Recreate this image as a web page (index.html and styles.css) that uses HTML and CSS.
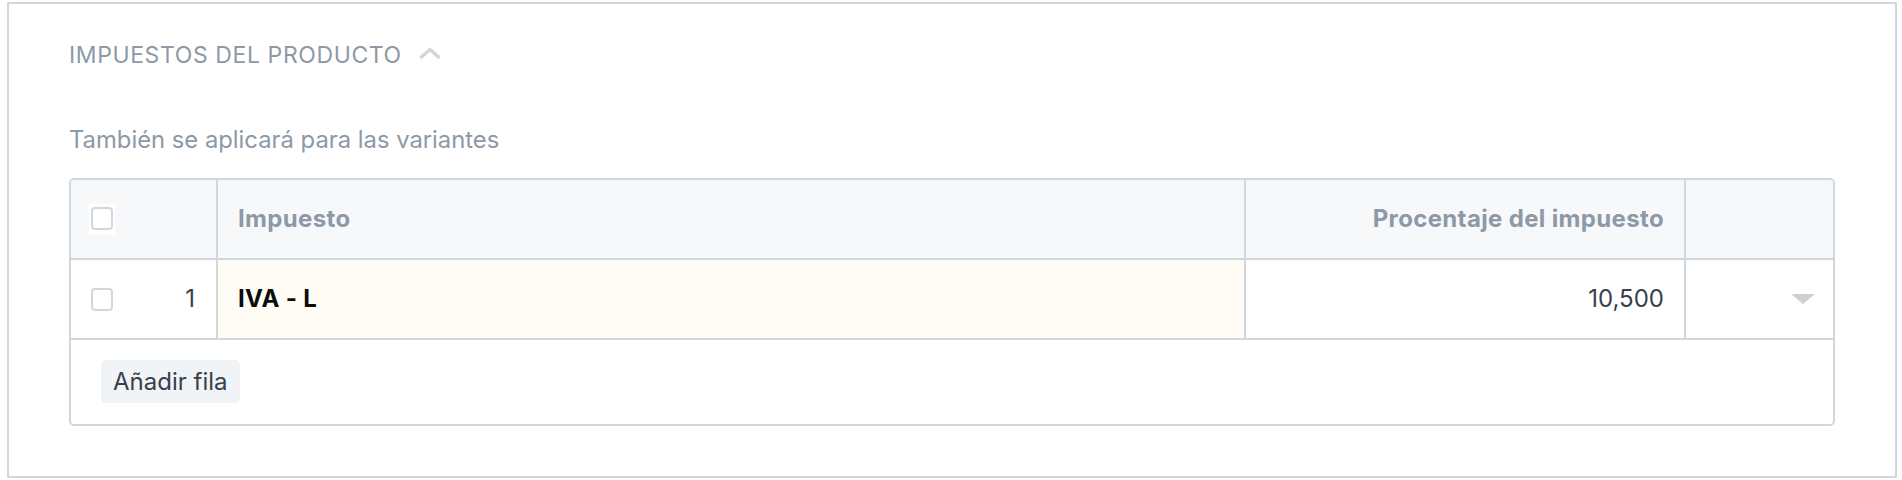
FILE: index.html
```html
<!DOCTYPE html>
<html lang="es">
<head>
<meta charset="utf-8">
<title>Impuestos del producto</title>
<link rel="stylesheet" href="styles.css">
</head>
<body>
<div class="page">
  <section class="panel">
    <div class="section-head">
      <span class="section-title">IMPUESTOS DEL PRODUCTO</span>
      <svg class="chevron" width="22" height="12" viewBox="0 0 22 12" aria-hidden="true">
        <polyline points="2.5,10 11,2.5 19.5,10" fill="none" stroke="#d1d8dd" stroke-width="3.6" stroke-linecap="round" stroke-linejoin="round"/>
      </svg>
    </div>
    <p class="help">También se aplicará para las variantes</p>
    <div class="grid">
      <div class="grid-row grid-head">
        <div class="cell c-idx"><span class="cb-wrap"><span class="cb"></span></span></div>
        <div class="cell c-name">Impuesto</div>
        <div class="cell c-rate">Procentaje del impuesto</div>
        <div class="cell c-act"></div>
      </div>
      <div class="grid-row grid-body">
        <div class="cell c-idx"><span class="cb"></span><span class="row-no">1</span></div>
        <div class="cell c-name editable"><span class="tax-name">IVA - L</span></div>
        <div class="cell c-rate"><span class="rate">10,500</span></div>
        <div class="cell c-act"><span class="caret"></span></div>
      </div>
      <div class="grid-footer">
        <button class="btn-add" type="button">Añadir fila</button>
      </div>
    </div>
  </section>
</div>
</body>
</html>
```
FILE: styles.css
```css
* { box-sizing: border-box; }

html, body {
  margin: 0;
  padding: 0;
  background: #ffffff;
}

body {
  font-family: Inter, "Noto Sans", "Liberation Sans", sans-serif;
  color: #36414c;
}

.page {
  padding: 2px 5px 0 7px;
}

.panel {
  border: 2px solid #d1d8dd;
  height: 476px;
  padding: 37px 60px 0 60px;
}

.section-head {
  display: flex;
  align-items: center;
  height: 28px;
}

.section-title {
  font-size: 23px;
  line-height: 28px;
  letter-spacing: 0.6px;
  color: #8d99a6;
}

.chevron {
  margin-left: 17px;
  margin-bottom: 4px;
}

.help {
  margin: 57px 0 0 0;
  font-size: 23.8px;
  line-height: 28px;
  color: #8d99a6;
}

.grid {
  margin-top: 24px;
  border: 2px solid #d1d8dd;
  border-radius: 5px;
  overflow: hidden;
}

.grid-row {
  display: grid;
  grid-template-columns: 147px 1028px 440px 1fr;
  height: 80px;
  border-bottom: 2px solid #d1d8dd;
}

.grid-head {
  background: #f7f8fa;
  font-weight: 700;
  letter-spacing: 0.35px;
  color: #8d99a6;
}

.cell {
  display: flex;
  align-items: center;
  font-size: 24px;
  line-height: 28px;
  border-right: 2px solid #d1d8dd;
}

.cell.c-act {
  border-right: none;
}

.c-idx {
  padding: 0 21px 0 20px;
  justify-content: space-between;
}

.c-name {
  padding-left: 20px;
}

.c-rate {
  justify-content: flex-end;
  padding-right: 20px;
}

.c-act {
  justify-content: flex-end;
  padding-right: 18px;
}

.editable {
  background: #fffcf5;
}

.cb-wrap {
  display: inline-flex;
  background: #ffffff;
  padding: 3px 2px 5px 2px;
  margin-left: -2px;
}

.cb {
  display: inline-block;
  width: 22px;
  height: 23px;
  border: 2px solid #d1d8dd;
  border-radius: 4px;
  background: #ffffff;
}

.row-no {
  color: #36414c;
  font-weight: 400;
}

.tax-name {
  font-weight: 700;
  letter-spacing: 0.35px;
  color: #0b0b0b;
}

.rate {
  color: #36414c;
}

.caret {
  width: 0;
  height: 0;
  border-left: 12px solid transparent;
  border-right: 12px solid transparent;
  border-top: 10px solid #cfcfcf;
}

.grid-footer {
  height: 84px;
  padding: 20px 0 0 30px;
}

.btn-add {
  height: 43px;
  padding: 0 12px;
  border: none;
  border-radius: 5px;
  background: #f0f4f7;
  font-family: inherit;
  font-size: 24px;
  line-height: 28px;
  color: #36414c;
}
```
